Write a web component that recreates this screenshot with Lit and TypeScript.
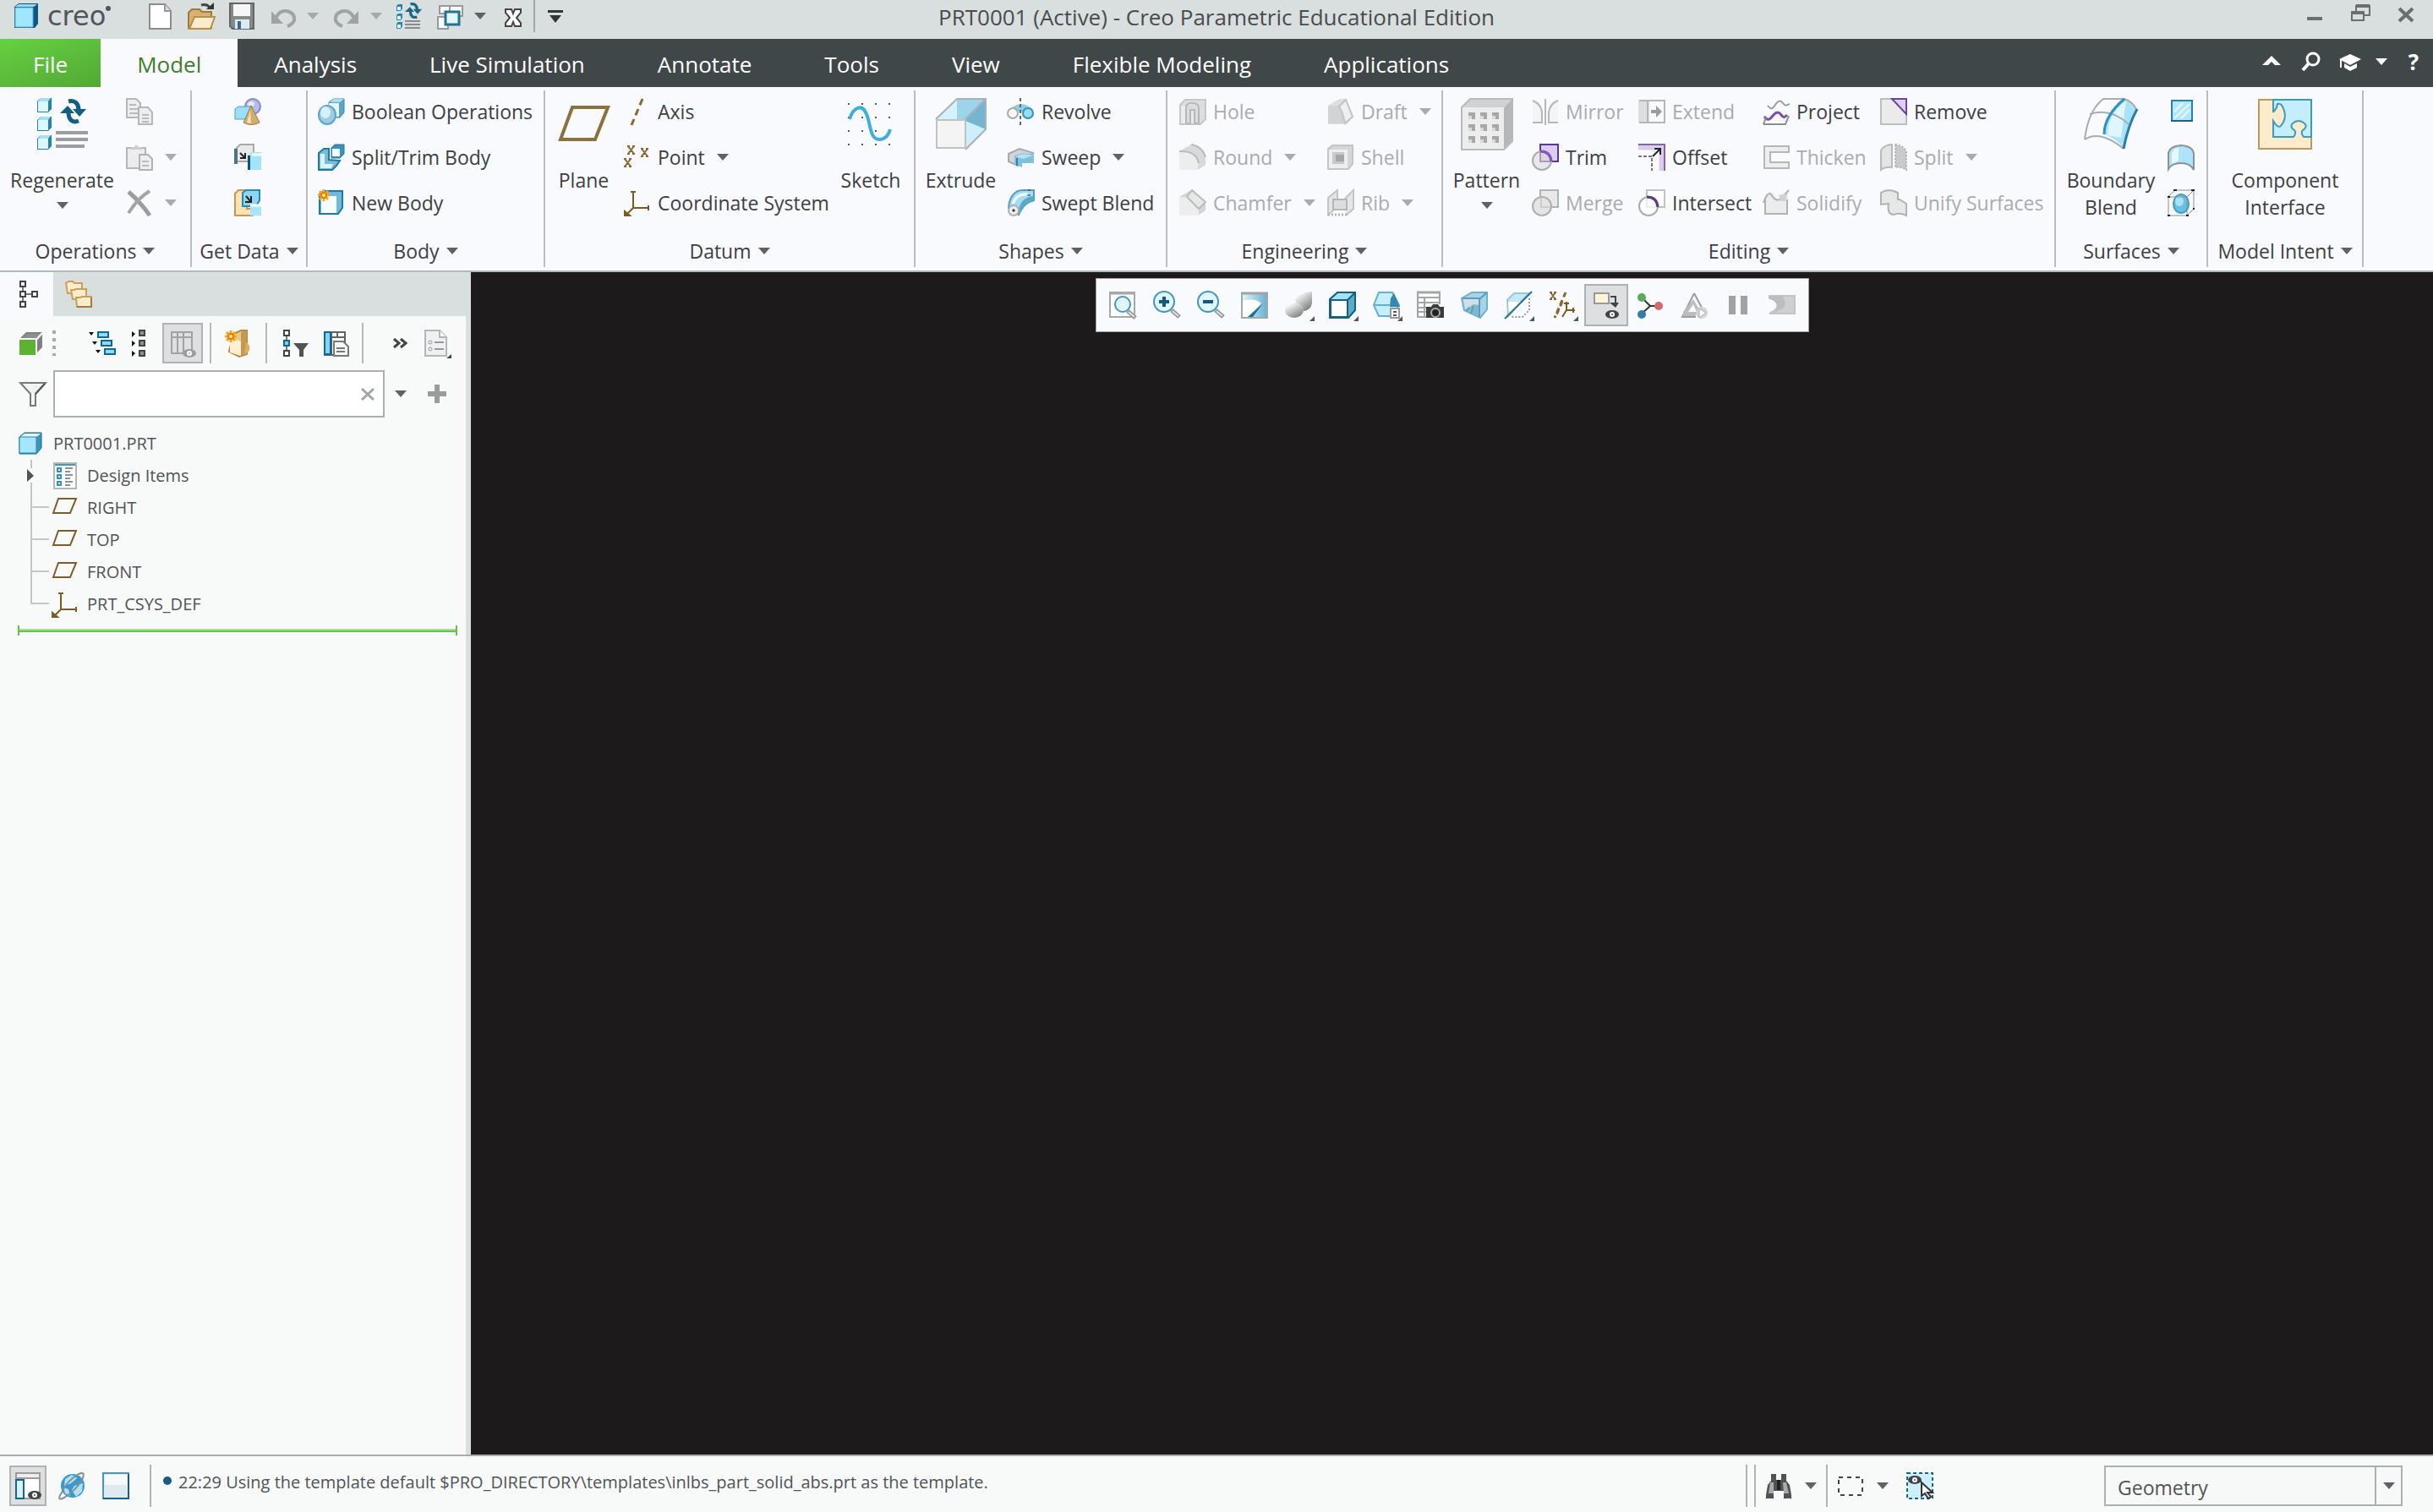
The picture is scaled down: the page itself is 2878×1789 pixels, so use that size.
import { LitElement, html, css, svg, nothing } from "lit";
import type { TemplateResult } from "lit";
import { customElement, state } from "lit/decorators.js";
import { classMap } from "lit/directives/class-map.js";

/* ---------- icons ---------- */

const smallCube = (x: number, y: number) => svg`
  <path d="M${x} ${y + 5}l4-4h13v13l-4 4H${x}z" fill="#1f86b0"/>
  <path d="M${x + 1} ${y + 5}l3-4h12l-3 4z" fill="#a4e0f5"/>
  <path d="M${x + 1} ${y + 5}h12v12H${x + 1}z" fill="#dff7ff"/>`;

const tinyCube = (x: number, y: number) => svg`
  <path d="M${x} ${y + 2}l2-2h5v5l-2 3H${x}z" fill="#2587b3"/>
  <path d="M${x + 1} ${y + 3}h4v4H${x + 1}z" fill="#e6f9ff"/>`;

const cross = (x: number, y: number, s = 7) =>
  svg`<path d="M${x} ${y}l${s} ${s + 2}M${x + s} ${y}l-${s} ${s + 2}M${x - 1} ${y}h3M${x + s - 2} ${y}h3M${x - 1} ${y + s + 2}h3M${x + s - 2} ${y + s + 2}h3" stroke="#87682f" stroke-width="2" fill="none"/>`;

const spark = (x: number, y: number) => svg`
  <path d="M${x} ${y - 7}v14M${x - 7} ${y}h14M${x - 5} ${y - 5}l10 10M${x + 5} ${y - 5}l-10 10" stroke="#f5a81c" stroke-width="3"/>
  <circle cx="${x}" cy="${y}" r="3" fill="#fff3a0" stroke="#e87a10" stroke-width="2"/>`;

const eye = (x: number, y: number, c = "#404446") => svg`
  <ellipse cx="${x}" cy="${y}" rx="8" ry="5" fill="${c}"/>
  <circle cx="${x}" cy="${y}" r="3" fill="#fff"/><circle cx="${x}" cy="${y}" r="1" fill="${c}"/>`;

const corner = svg`<path d="M35 29v6h-6z" fill="#555"/>`;

const handle = (x: number, y: number) => svg`
  <path d="M${x} ${y}l9 8" stroke="#8d8f91" stroke-width="5"/><path d="M${x + 1} ${y + 1}l7 6" stroke="#e4e5e6" stroke-width="2"/>`;

const cycle = (c: string) => svg`
  <path d="M10 3c8-2 12 3 12 10" fill="none" stroke="${c}" stroke-width="5"/>
  <path d="M15 12h16l-8 9z" fill="${c}"/>
  <path d="M22 26c-8 3-12-2-12-10" fill="none" stroke="${c}" stroke-width="5"/>
  <path d="M0 17h17l-8-9z" fill="${c}"/>`;

const planeSmall = svg`<path d="M8 5h21l-7 17H2z" fill="none" stroke="#7b5f2b" stroke-width="2"/>`;

const axes = svg`<path d="M11 3v19h19M11 22l-8 8M8 3h6M29 19v6" fill="none" stroke="#7a5b22" stroke-width="2"/><path d="M1 26l6 5H1z" fill="#7a5b22" stroke="#7a5b22" stroke-width="2"/>`;

const icons: Record<string, TemplateResult> = {
  regen: svg`${smallCube(2, 0)}${smallCube(2, 22)}${smallCube(2, 44)}
    <g transform="translate(29 2)">${cycle("#135e82")}</g>
    <path d="M24 42h38M24 50h38M24 58h34" stroke="#9b9da0" stroke-width="4"/>`,
  copy: svg`<g fill="#eee" stroke="#b4b6b8" stroke-width="2"><path d="M1 1h11l5 5v17H1z"/><path d="M15 11h11l5 6v14H15z"/></g>
    <path d="M4 8h8M4 13h10M4 18h10M19 20h8M19 24h8M19 28h8" stroke="#b9bbbd" stroke-width="2"/>`,
  paste: svg`<path d="M1 5h22v24H1z" fill="#ececec" stroke="#b4b6b8" stroke-width="2"/><path d="M6 7V4h4l2-3 3 3h4v3z" fill="#ccc"/>
    <path d="M16 13h10l5 5v13H16z" fill="#eee" stroke="#b0b2b4" stroke-width="2"/><path d="M19 21h8M19 26h8" stroke="#b9bbbd" stroke-width="2"/>`,
  del: svg`<path d="M3 3c5 4 18 17 25 28" fill="none" stroke="#9a9c9e" stroke-width="5"/><path d="M28 2C18 8 10 17 3 28" fill="none" stroke="#a2a4a6" stroke-width="4"/>`,
  udf: svg`<circle cx="22" cy="10" r="9" fill="#b5bce8" stroke="#838bc9" stroke-width="2"/><ellipse cx="20" cy="7" rx="4" ry="3" fill="#e6e9fb"/>
    <path d="M1 13l4-3h16v12l-3 3H1z" fill="#9bdffa" stroke="#4f9fc2" stroke-width="1"/>
    <path d="M20 9l10 20q-10 5-19 0z" fill="#d2ae6c" stroke="#a07735" stroke-width="1"/><path d="M19 14l-4 15q3 1 5 1z" fill="#f3deb2"/>`,
  copygeom: svg`<path d="M1 7l6-6h16v14l-6 6H1z" fill="#e9e9e9" stroke="#a9a9a9" stroke-width="2"/><path d="M0 6h4v18H0z" fill="#4c7386"/>
    <path d="M7 11l6 6M13 11v6H7" stroke="#222" stroke-width="2" fill="none"/><path d="M17 13l3-3h12v21H17z" fill="#a3e4fd"/><path d="M16 14h3v17h-3z" fill="#0d5175"/><path d="M21 13h11" stroke="#fff" stroke-width="3"/>`,
  shrink: svg`<path d="M1 5l4-4h10v22h7v8H1z" fill="#fbe3b6" stroke="#c69a4c" stroke-width="2"/>
    <path d="M10 4l4-3h16v12l-4 7H10z" fill="#8fd5f2" stroke="#2a88b1" stroke-width="2"/><path d="M14 8l6 7M20 8v7h-7" stroke="#222" stroke-width="2" fill="none"/>
    <path d="M19 20h13v11H19z" fill="#a5e6ff"/><path d="M19 19h13" stroke="#fff" stroke-width="3"/>`,
  boolean: svg`<path d="M13 5l6-4h12v16l-5 6H13z" fill="#5aa6c4" stroke="#378aaa" stroke-width="1"/><path d="M13 6h12v16H13z" fill="#e6f7fd"/><path d="M14 5l5-4h12l-5 4z" fill="#a9dff1"/>
    <ellipse cx="11" cy="20" rx="10" ry="11" fill="#9ccde2" stroke="#5fa5c4" stroke-width="2"/><ellipse cx="9" cy="17" rx="6" ry="7" fill="#d6f0fa"/>`,
  splitbody: svg`<path d="M1 11l6-5h6v13l13 1-4 6-5 5H1z" fill="#7abddb" stroke="#2278a0" stroke-width="2"/><path d="M3 12h5v12h10l-2 5H3z" fill="#d9f4fe"/>
    <path d="M16 5l4-4h11v11l-5 5H16z" fill="#3b92b8" stroke="#23799f" stroke-width="1"/><path d="M17 6h9v9h-9z" fill="#f2fcff"/>`,
  newbody: svg`<path d="M2 6l5-4h22v20l-5 7H2z" fill="#72b9d9" stroke="#1b7ba5" stroke-width="2"/><path d="M4 8h18v20H4z" fill="#f7fdff"/>${spark(7, 7)}`,
  plane: svg`<path d="M18 12h42L45 50H4z" fill="none" stroke="#8c713c" stroke-width="4"/>`,
  axis: svg`<path d="M22 1l-13 31" stroke="#87682f" stroke-width="3" stroke-dasharray="8 5"/>`,
  point: svg`${cross(5, 3)}${cross(21, 6)}${cross(1, 18)}`,
  csys: axes,
  sketch: svg`<path d="M5 8h56M5 24h56M5 40h56M5 56h56" stroke="#555" stroke-width="2" stroke-dasharray="2 14"/>
    <path d="M7 26C11 12 22 7 27 20c5 12 4 30 15 30 7 0 11-5 13-12" fill="none" stroke="#3eaee0" stroke-width="4"/>`,
  extrude: svg`<path d="M2 26L27 2h34v36L37 62z" fill="#cdeefc"/><path d="M27 2h34v36L37 28z" fill="#74b5d1"/><path d="M2 26L27 2h34L37 26z" fill="#9dd4ea"/><path d="M2 26L27 2v24z" fill="#d5f3ff"/>
    <path d="M2 26L27 2h34v36L37 62M37 26L61 2" fill="none" stroke="#a9b1b5" stroke-width="2"/><path d="M3 27h34v33H3z" fill="#f4f4f4" stroke="#bfc1c2" stroke-width="2"/>`,
  revolve: svg`<path d="M2 14Q16 0 30 14v6q-14-8-28 0z" fill="#8fcde6"/><circle cx="6" cy="18" r="6" fill="#f6f6f6" stroke="#a7a9ab" stroke-width="2"/>
    <circle cx="24" cy="18" r="6" fill="#99dcf6" stroke="#2f93bd" stroke-width="2"/><path d="M15 0v32" stroke="#666" stroke-width="2" stroke-dasharray="4 3"/>`,
  sweep: svg`<path d="M1 12l13-6 16 5-5 6-9-3-4 3v9L1 21z" fill="#d3d6d8" stroke="#a7aaac" stroke-width="2"/><path d="M8 14l10-3 13 2v10l-14 0v5l-9-4z" fill="#7fc0dc"/><path d="M9 15l9-3 12 2-12 4z" fill="#b5e3f4"/><path d="M11 17v9" stroke="#2b84aa" stroke-width="2"/>`,
  sweptblend: svg`<path d="M1 22C2 9 8 1 18 1h13v12C20 16 17 22 13 30z" fill="#a7dcf0" stroke="#4c9fc2" stroke-width="2"/><path d="M12 28C14 15 20 9 31 8v6c-9 2-13 8-17 15z" fill="#5ba8c8"/><path d="M6 17C9 9 14 5 24 6" fill="none" stroke="#f4fcff" stroke-width="3"/><circle cx="7" cy="25" r="6" fill="#eee" stroke="#aeb0b2" stroke-width="2"/><path d="M6 24h2v2H6zM24 1h3M27 7h-4" fill="#333" stroke="#333"/>`,
  hole: svg`<path d="M1 8l6-6h24v23l-6 6H1z" fill="#dcddde" stroke="#c6c7c8" stroke-width="2"/><path d="M2 9h22v21H2z" fill="#eaebeb"/><path d="M8 30V12q0-7 8-6 7 0 7 6v18h-5V14h-5v16z" fill="#ddd" stroke="#b6b7b8" stroke-width="2"/>`,
  round: svg`<path d="M0 9L14 1q16 3 17 14v10l-9 6H0z" fill="#d8d9da"/><path d="M0 9q20 0 22 12v10H0z" fill="#ededed"/><path d="M0 9q20-1 23 14M14 1q13 2 17 15" fill="none" stroke="#bbb" stroke-width="2"/>`,
  chamfer: svg`<path d="M0 9L14 1l17 14v10l-9 6H0z" fill="#d3d4d5"/><path d="M0 9h9l14 14v8H0z" fill="#ededed"/><path d="M9 9l6-8 16 14-8 8z" fill="#e6e7e7" stroke="#bbb" stroke-width="2"/>`,
  draft: svg`<path d="M1 9L14 1h8l9 21-8 9H1z" fill="#dededf"/><path d="M1 9h13l8 17-3 4H1z" fill="#d2d3d4"/><path d="M14 10l8-8 8 20-9 8-3-12z" fill="#efefef" stroke="#c2c3c4" stroke-width="2"/>`,
  shell: svg`<path d="M1 6l5-4h24v22l-5 6H1z" fill="#d5d6d7" stroke="#c3c4c5" stroke-width="2"/><path d="M2 7h22v22H2z" fill="#eee"/><path d="M6 10h14v14H6z" fill="#c6c8c9"/><path d="M10 13h10v8H10z" fill="#a4a6a7"/>`,
  rib: svg`<path d="M1 10L12 1v20L1 30zM20 12L31 1v22l-9 8" fill="#e4e5e5" stroke="#c3c4c5" stroke-width="2"/><path d="M7 12h16v12H7z" fill="#dcdddd" stroke="#b5b6b7" stroke-width="2"/><path d="M1 30h22" stroke="#b4b5b6" stroke-width="3" stroke-dasharray="2 2"/>`,
  pattern: svg`<path d="M2 12L12 2h50v50L52 62H2z" fill="#d1d2d3" stroke="#b9babb" stroke-width="2"/><path d="M52 13L61 3v48l-9 10z" fill="#b5b7b8"/><path d="M3 12h49v49H3z" fill="#ededee"/>
    <g fill="#a5a7a9"><path d="M10 18h8v8h-8zM24 18h8v8h-8zM38 18h8v8h-8zM10 32h8v8h-8zM24 32h8v8h-8zM38 32h8v8h-8zM10 46h8v8h-8zM24 46h8v8h-8zM38 46h8v8h-8z"/></g>
    <g fill="#d9dadb"><path d="M10 22h4v4h-4zM24 22h4v4h-4zM38 22h4v4h-4zM10 36h4v4h-4zM24 36h4v4h-4zM38 36h4v4h-4zM10 50h4v4h-4zM24 50h4v4h-4zM38 50h4v4h-4z"/></g>`,
  mirror: svg`<path d="M1 3q10 4 11 14v12H1M31 3q-10 4-11 14v12h11" fill="#f4f4f4" stroke="#b5b7b8" stroke-width="2"/><path d="M16 1v31" stroke="#b5b7b8" stroke-width="2"/>`,
  trim: svg`<path d="M10 1h21v20H10z" fill="#d9cdf3" stroke="#5e3a86" stroke-width="2"/><ellipse cx="12" cy="20" rx="11" ry="11" fill="#dcdcdc" fill-opacity=".6" stroke="#aaacad" stroke-width="2"/><path d="M10 9q12 0 13 12" fill="none" stroke="#8353b8" stroke-width="3"/>`,
  merge: svg`<path d="M10 1h21v20H10z" fill="#e8e8e8" stroke="#b0b2b3" stroke-width="2"/><ellipse cx="12" cy="20" rx="11" ry="11" fill="#e4e4e4" stroke="#adafb0" stroke-width="2"/><path d="M11 10v11h11" fill="none" stroke="#ccc" stroke-width="2"/>`,
  extend: svg`<path d="M0 3h13v26H0z" fill="#dcdedf"/><path d="M1 3h30v26H1M11 3v26" fill="none" stroke="#b4b6b7" stroke-width="2"/><path d="M15 14h6V9l7 7-7 7v-5h-6z" fill="#999b9d"/>`,
  offset: svg`<path d="M0 4h28v28" fill="none" stroke="#d9cdea" stroke-width="7"/><path d="M0 1h31v31" fill="none" stroke="#8565a6" stroke-width="2"/><path d="M0 15h16v17" fill="none" stroke="#777" stroke-width="2" stroke-dasharray="4 2"/><path d="M17 15l8-8M19 6h7v7" fill="none" stroke="#222" stroke-width="2"/>`,
  intersect: svg`<path d="M10 1h21v20H10z" fill="#fff" stroke="#bfc1c2" stroke-width="2"/><ellipse cx="12" cy="20" rx="11" ry="11" fill="#fff" fill-opacity=".7" stroke="#a9abac" stroke-width="2"/><path d="M10 9q12 0 13 12" fill="none" stroke="#5d3a86" stroke-width="3"/>`,
  project: svg`<path d="M6 9c4 5 6 4 9-1s6-6 9-2 4 3 8 1" fill="none" stroke="#999b9d" stroke-width="2"/><path d="M2 22c4 5 6 4 10-1s7-5 10-1 4 3 7 0" fill="none" stroke="#7b4fa8" stroke-width="3"/><path d="M1 31h26l4-10M1 31l3-8" fill="none" stroke="#8a8c8e" stroke-width="2"/>`,
  thicken: svg`<path d="M31 3H2v26h29v-7H9V10h22z" fill="#eee" stroke="#b4b6b7" stroke-width="2"/>`,
  solidify: svg`<path d="M2 29V13l5-8q5-4 8 3t8-1l7-7v29z" fill="#ececec"/><path d="M1 16q5-14 9-10c4 7 8 8 12 5l9-10M3 12v17h26V12" fill="none" stroke="#b0b2b3" stroke-width="2"/><path d="M19 7l10-2-2 9h-6z" fill="#d0d1d2"/>`,
  remove: svg`<path d="M1 1h30v30H1z" fill="#ebebeb" stroke="#bcbebf" stroke-width="2"/><path d="M14 1h17v18z" fill="#dcd0f6" stroke="#6c4797" stroke-width="2"/>`,
  split: svg`<path d="M1 8q4-7 13-7v27q-8-1-13 3z" fill="#e3e4e4" stroke="#b8b9ba" stroke-width="2"/><path d="M18 1q9 1 13 8v22q-6-4-13-3z" fill="#c9cacb" stroke="#b0b2b3" stroke-width="2" stroke-dasharray="2 2"/>`,
  unify: svg`<path d="M1 4q9-6 20 0v8h2l8 5v14q-8-4-15-1-8 0-6-13l-9 1z" fill="#e6e7e7" stroke="#b0b2b3" stroke-width="2"/>`,
  boundary: svg`<path d="M24 3Q38 0 50 2q8 3 14 14Q55 33 48 60 40 45 22 44L36 6z" fill="#fff"/><path d="M48 2q10 3 15 14Q53 33 47 61 40 50 25 44 26 22 48 2z" fill="#a8e3fb"/><path d="M28 45Q28 20 50 4l-6 44z" fill="#dff6ff"/>
    <path d="M1 50Q5 16 23 2h25q10 3 15 14M1 50q18-12 46 11M7 20q25-8 46 12" fill="none" stroke="#a9abac" stroke-width="2"/><path d="M48 2Q24 22 24 44" fill="none" stroke="#2f92be" stroke-width="3"/><path d="M63 14Q52 34 47 61" fill="none" stroke="#2a7ea6" stroke-width="3"/>`,
  fill: svg`<path d="M5 3h24v24H5z" fill="#b3e6f9" stroke="#2a80a8" stroke-width="2"/><path d="M8 16l10-10M8 24L26 7M16 24l10-10" stroke="#e6f8ff" stroke-width="2"/><path d="M4 27h26" stroke="#1b6288" stroke-width="2"/>`,
  style: svg`<path d="M1 12Q2 3 16 2q14 1 15 10v19q-4-8-15-8T1 30z" fill="#aee4f9" stroke="#8d9193" stroke-width="2"/><path d="M5 12Q7 5 13 5v15l-8 4z" fill="#e9f9ff"/>`,
  freestyle: svg`<ellipse cx="16" cy="17" rx="9" ry="11" fill="#6bbfe0" stroke="#3fa0c6" stroke-width="2"/><ellipse cx="14" cy="14" rx="5" ry="6" fill="#a9e2f5"/><path d="M1 8L9 1h22v22l-8 8H1zM1 9h22v22M23 9l8-8" fill="none" stroke="#8b8e90" stroke-width="1"/><path d="M7 1h4M28 1h4M0 9h3M0 31h3M22 31h3M30 23h2" stroke="#222" stroke-width="2"/>`,
  component: svg`<path d="M1 3h62v58H1z" fill="#fdebcb" stroke="#bb9a5b" stroke-width="2"/><path d="M18 3h45v44H54q-4-5-1-8 6-4 2-8-7-6-14 0-4 4 2 8 3 3-1 8H18V28q5 9 9 6 7-8 4-18-3-10-8-8-1 7-5 9z" fill="#c3eefa" stroke="#3a9ac0" stroke-width="2"/>`,

  /* quick access bar */
  creocube: svg`<path d="M0 5l5-4h23v24l-4 5H0z" fill="#0d5680"/><path d="M1 5l4-3h22l-4 3z" fill="#8fdcf6"/><path d="M1 6h21v23H1z" fill="#a0e6fe" stroke="#63acc8" stroke-width="1"/>`,
  newdoc: svg`<path d="M3 2h18l7 8v21H3z" fill="#fff" stroke="#8a8c8e" stroke-width="2"/><path d="M21 2v8h7" fill="#ddd" stroke="#999" stroke-width="2"/>`,
  open: svg`<path d="M1 30V12l4-4h9l3 3h11v19z" fill="#d8b274" stroke="#a37b37" stroke-width="2"/><path d="M2 31l6-14h24l-5 14z" fill="#fdeccb" stroke="#b98e45" stroke-width="2"/><path d="M16 3q7-2 10 3" fill="none" stroke="#444" stroke-width="3"/><path d="M22 8h9V0z" fill="#333"/>`,
  save: svg`<path d="M2 1h28v30H5l-3-3z" fill="#86898b" stroke="#666" stroke-width="2"/><path d="M6 2h20v14H6z" fill="#f6f6f6"/><path d="M8 20h17v11H8z" fill="#ddeaf2"/><path d="M11 22h4v9h-4z" fill="#3b6c8b"/>`,
  undo: svg`<path d="M8 17Q12 9 20 10q10 2 9 11-2 5-8 7" fill="none" stroke="#a0a3a4" stroke-width="4"/><path d="M2 10v15h14z" fill="#a0a3a4"/>`,
  redo: svg`<path d="M24 17Q20 9 12 10 2 12 3 21q2 5 8 7" fill="none" stroke="#a0a3a4" stroke-width="4"/><path d="M30 10v15H16z" fill="#a0a3a4"/>`,
  regensmall: svg`${tinyCube(1, 2)}${tinyCube(1, 13)}${tinyCube(1, 23)}<g transform="translate(11 0) scale(.65)">${cycle("#1a6789")}</g><path d="M11 22h18M11 26h18M11 30h18" stroke="#888b8d" stroke-width="2"/>`,
  windows: svg`<path d="M1 17h12v14H1zM15 4h15v12H15zM3 4h12v9H3z" fill="#fafafa" stroke="#97999b" stroke-width="2"/><path d="M10 11h16v15H10z" fill="#e2f6fe" stroke="#247295" stroke-width="3"/>`,
  closewin: svg`<path d="M7 8h7l2 5 2-5h7v4l-5 6 5 6v4h-7l-2-5-2 5H7v-4l5-6-5-6z" fill="#fff" stroke="#444" stroke-width="2"/>`,
  more: svg`<path d="M7 9h18v3H7z" fill="#333"/><path d="M9 15h14l-7 9z" fill="#333"/>`,
  minimize: svg`<path d="M7 18h18v4H7z" fill="#6b6f70"/>`,
  restore: svg`<path d="M11 12V5h16v11h-7" fill="none" stroke="#6b6f70" stroke-width="2"/><path d="M11 5h16" stroke="#6b6f70" stroke-width="4"/><path d="M6 13h14v9H6z" fill="none" stroke="#6b6f70" stroke-width="2"/><path d="M5 13h16" stroke="#6b6f70" stroke-width="4"/>`,
  close: svg`<path d="M8 8l16 15M24 8L8 23" stroke="#6b6f70" stroke-width="4"/>`,
  chevup: svg`<path d="M5 20L16 9l11 11h-7l-4-4-4 4z" fill="#fff"/>`,
  search: svg`<circle cx="19" cy="13" r="7" fill="none" stroke="#fff" stroke-width="3"/><path d="M14 18l-7 8" stroke="#fff" stroke-width="4"/>`,
  learn: svg`<path d="M16 7l13 6-13 7-13-7z" fill="#fff"/><path d="M9 18v5l7 4 8-4v-5l-8 4z" fill="#fff"/><path d="M5 13v10" stroke="#fff" stroke-width="2"/>`,

  /* model tree */
  tree: svg`<path d="M10 4v26M10 16h14" stroke="#777" stroke-width="2"/><g fill="#fff" stroke="#404446" stroke-width="2"><path d="M7 1h6v6H7zM7 13h6v6H7zM7 25h6v6H7zM21 13h6v6h-6z"/></g>`,
  folders: svg`<g fill="#fbeccb" stroke="#c99f59" stroke-width="2"><path d="M1 3l3-2h5l2 2h9v12H3z"/><path d="M7 11h4l2-1h12v12H9z"/><path d="M13 20h5l2-1h11v12H14z"/></g><path d="M14 31h17V20" fill="none" stroke="#a37b37" stroke-width="2"/>`,
  greencube: svg`<path d="M1 11l8-8h19v18l-7 7z" fill="#7d7f80"/><path d="M3 11l7-6h17l-6 6z" fill="#8c8e90"/><path d="M21 12l7-8" stroke="#fff" stroke-width="2"/><path d="M1 11h20v19H1z" fill="#5ab432"/><path d="M1 11h20v19" fill="none" stroke="#fff" stroke-width="2"/>`,
  expand: svg`<g fill="#8cdcfc" stroke="#15668c" stroke-width="2"><path d="M11 3h12v6H11zM15 13h12v6H15zM19 23h12v6H19z"/></g><path d="M0 3h6L3 7zM4 14h6l-3 4zM8 24h6l-3 4z" fill="#111"/>`,
  collapse: svg`<g fill="#8f9193" stroke="#404446" stroke-width="2"><path d="M17 1h6v6h-6zM17 13h6v6h-6zM17 25h6v6h-6z"/></g><path d="M8 2l4 3-4 4zM8 13l4 3-4 4zM8 25l4 3-4 4z" fill="#111"/>`,
  columns: svg`<path d="M3 3h24v25H3zM3 9h24M10 3v25M17 3v25" fill="none" stroke="#a0a3a4" stroke-width="2"/>${eye(24, 28, "#9a9c9e")}`,
  newbook: svg`<path d="M10 5l9-4h7v28l-9 3-12-6z" fill="#e9c888" stroke="#b78a3e" stroke-width="2"/><path d="M19 3l7-2v27l-7 3z" fill="#c39a50"/><path d="M6 10l13 4v17L6 27z" fill="#fdf0d2"/><path d="M25 15q7 4 3 11l-5 4z" fill="#d9b066"/>${spark(7, 8)}`,
  treefilter: svg`<g transform="translate(2 0)"><path d="M5 5v24" stroke="#777" stroke-width="2"/><g stroke="#404446" stroke-width="2"><path d="M2 1h6v6H2zM2 25h6v6H2z" fill="#fff"/><path d="M2 13h6v6H2z" fill="#6fd0f8" stroke="#15668c"/></g><path d="M13 16h18l-6 8v8h-5v-8z" fill="#505355"/></g>`,
  treecols: svg`<g transform="translate(2 0)"><path d="M2 3h24v27H2zM2 9h24M10 3v26M17 3v7" fill="#fff" stroke="#606366" stroke-width="2"/><path d="M2 3h7v26H2z" fill="#7fd6fa" stroke="#15668c" stroke-width="2"/><path d="M13 14h11l6 6v11H13z" fill="#f6f6f6" stroke="#77797b" stroke-width="2"/><path d="M16 22h10M16 26h10" stroke="#777" stroke-width="2"/></g>`,
  chevrons: svg`<path d="M7 11l6 5-6 5M15 11l6 5-6 5" fill="none" stroke="#404446" stroke-width="3"/>`,
  listdoc: svg`<path d="M1 1h17l8 8v22H1z" fill="#eef1f2" stroke="#b4b6b8" stroke-width="2"/><path d="M18 1v8h8" fill="#fff" stroke="#b4b6b8" stroke-width="2"/><circle cx="7" cy="15" r="2" fill="none" stroke="#999"/><circle cx="7" cy="23" r="2" fill="none" stroke="#999"/><path d="M12 15h11M12 23h11" stroke="#999" stroke-width="2"/><path d="M32 29v5h-6z" fill="#444"/>`,
  funnel: svg`<path d="M2 3h30L20 16v14h-6V16z" fill="#f3f3f3" stroke="#77797b" stroke-width="2"/><path d="M20 16l11-12" stroke="#555" stroke-width="2"/>`,
  clear: svg`<path d="M9 10l14 13M23 10L9 23" stroke="#a1a4a6" stroke-width="3"/>`,
  plus: svg`<path d="M13 5h6v8h8v6h-8v8h-6v-8H5v-6h8z" fill="#999b9d"/>`,
  part: svg`<path d="M2 8l6-5h20v18l-6 7H2z" fill="#3b94bd" stroke="#1b6a92" stroke-width="1"/><path d="M3 8l5-4h19l-5 4z" fill="#e3f8ff"/><path d="M2 8h20v19H2z" fill="#a5e6fe" stroke="#2f83aa" stroke-width="1"/>`,
  design: svg`<path d="M3 1h26v30H3z" fill="#fff" stroke="#b4b6b8" stroke-width="2"/><path d="M4 3h24" stroke="#419cc2" stroke-width="2"/><g fill="#fff" stroke="#2f93bd" stroke-width="2"><path d="M7 7h4v4H7zM7 15h4v4H7zM7 23h4v4H7z"/></g><path d="M16 7h9M16 11h6M16 15h9M16 19h6M16 23h9M16 27h6" stroke="#8f9294" stroke-width="2"/>`,
  planesmall: planeSmall,

  /* graphics toolbar */
  refit: svg`<path d="M1 1h29v29H1z" fill="#fff" stroke="#a5a7a9" stroke-width="2"/><path d="M0 2h31" stroke="#a5a7a9" stroke-width="3"/><circle cx="16" cy="15" r="9" fill="#dff6ff" stroke="#4796b9" stroke-width="2"/>${handle(22, 23)}`,
  zoomin: svg`<circle cx="13" cy="12" r="12" fill="#dff6ff" stroke="#4796b9" stroke-width="2"/>${handle(22, 22)}<path d="M7 12h12M13 6v12" stroke="#14587a" stroke-width="4"/>`,
  zoomout: svg`<circle cx="13" cy="12" r="12" fill="#dff6ff" stroke="#4796b9" stroke-width="2"/>${handle(22, 22)}<path d="M7 12h12" stroke="#14587a" stroke-width="4"/>`,
  repaint: svg`<defs><linearGradient id="sky" x1="0" x2="1"><stop offset="0" stop-color="#e4f5fb"/><stop offset="1" stop-color="#67b0ce"/></linearGradient></defs>
    <path d="M1 2h30v29H1z" fill="url(#sky)" stroke="#9fa9ae" stroke-width="2"/><path d="M2 30V11q14-4 22 3L8 30z" fill="#fff"/><path d="M26 14L8 30h6z" fill="#1c6f96"/><path d="M0 2h32" stroke="#a1a4a6" stroke-width="3"/>`,
  rendering: svg`<defs><linearGradient id="ball" x1=".2" x2=".8" y1=".1" y2="1"><stop offset="0" stop-color="#fff"/><stop offset="1" stop-color="#777"/></linearGradient></defs>
    <path d="M12 9Q16 2 32 0v14q-2 8-9 9l-8-2z" fill="url(#ball)"/><ellipse cx="11" cy="22" rx="11" ry="9" fill="url(#ball)"/>${corner}`,
  shaded: svg`<path d="M1 9l9-8h21v21l-8 9H1z" fill="#5cacc9" stroke="#15607f" stroke-width="2"/><path d="M3 9l8-7h18l-7 7z" fill="#a5e2f5"/><path d="M2 10h20v20H2z" fill="#fff" stroke="#15607f" stroke-width="2"/><path d="M22 10l9-9" stroke="#15607f" stroke-width="2"/>${corner}`,
  saved: svg`<path d="M7 1h16l8 15-8 13H7L1 16z" fill="#c8edfb" stroke="#5fb2d3" stroke-width="2"/><path d="M25 2l7 16H20l1-10z" fill="#3488ae"/><path d="M2 16h18" stroke="#5fb2d3" stroke-width="2"/><path d="M21 20h10v11H21z" fill="#fff" stroke="#999" stroke-width="2"/><path d="M24 24h4M24 28h4" stroke="#555" stroke-width="2"/>${corner}`,
  viewmgr: svg`<path d="M1 1h26v28H1z" fill="#fff"/><path d="M1 1v29h12M1 7h26M1 13h26M1 19h14M1 24h12M9 7v22M27 1v14" fill="none" stroke="#a3a5a7" stroke-width="2"/><path d="M0 1h28" stroke="#a3a5a7" stroke-width="3"/><path d="M11 18h6l2-3h6l2 3h5v13H11z" fill="#3c3c3c"/><circle cx="22" cy="25" r="5" fill="#222" stroke="#aaa" stroke-width="2"/>`,
  persp: svg`<path d="M1 8L13 1h18v20l-8 10L4 22z" fill="#a6d3e5" stroke="#6fb0cb" stroke-width="2"/><path d="M3 8h18v14L5 21z" fill="#cfdfe6"/><path d="M6 21l9-6 7 1v14z" fill="#7fb9d0"/><path d="M22 9l9-8M22 9v21M2 8h20M10 19l-4 4M15 17l-3 9" stroke="#5b9fbd" stroke-width="2" fill="none"/>`,
  section: svg`<path d="M3 10l8-8h18L4 29z" fill="#c4e8f5" stroke="#9cc5d6" stroke-width="2"/><path d="M4 12h17L5 28z" fill="#fff"/><path d="M29 8v14l-8 8H8" fill="none" stroke="#999" stroke-width="2" stroke-dasharray="2 2"/><path d="M32 0L0 32" stroke="#276f90" stroke-width="2"/>${corner}`,
  datumdisp: svg`${cross(2, 1, 6)}<path d="M20 1L7 31M16 12L8 30" fill="none" stroke="#87682f" stroke-width="3" stroke-dasharray="6 4"/><path d="M21 12v10h10M21 22l-5 8M18 14h6M29 19v6" fill="none" stroke="#7a5b22" stroke-width="2"/>${corner}`,
  annot: svg`<path d="M2 2h17v12H2z" fill="#fff3da" stroke="#999" stroke-width="2"/><path d="M21 6h6v9" fill="none" stroke="#404446" stroke-width="2"/><path d="M20 13l11 0-4 6z" fill="#404446"/>${eye(23, 27)}`,
  spin: svg`<path d="M5 6l11 11h10M16 17L5 27" fill="none" stroke="#333" stroke-width="2"/><circle cx="6" cy="7" r="5" fill="#5ba95b"/><circle cx="26" cy="17" r="5" fill="#d9686a"/><circle cx="6" cy="27" r="5" fill="#2f7fa8"/>`,
  simulate: svg`<path d="M16 2L2 30h16M16 2l9 17" fill="none" stroke="#9b9da0" stroke-width="2"/><path d="M15 9l8 14-6 6H3v-5z" fill="#bbbdbf"/><path d="M15 15l4 9H9z" fill="#fff"/><circle cx="25" cy="25" r="7" fill="#d3d4d5"/><path d="M22 20l8 5-8 6z" fill="#fff" stroke="#aaa"/>`,
  pause: svg`<path d="M5 5h8v22H5zM19 5h8v22h-8z" fill="#a0a2a4"/>`,
  stopflow: svg`<path d="M1 5h30v21H1q12-6 9-12Q7 9 1 8z" fill="#cfd0d1" stroke="#c3c4c5" stroke-width="2"/><path d="M1 5h15q6 8 2 14L6 26q10-14-5-18z" fill="#bcbdbe"/>`,

  /* status bar */
  panels: svg`<path d="M2 1h28v30H2z" fill="#fff" stroke="#9a9c9e" stroke-width="2"/><path d="M2 1h28v6H2z" fill="#eee" stroke="#9a9c9e" stroke-width="2"/><path d="M2 9h9v22H2z" fill="#d7f2fc" stroke="#15668c" stroke-width="2"/>${eye(24, 27)}`,
  globe: svg`<circle cx="17" cy="16" r="14" fill="#389bd0"/><path d="M8 8l8-5 6 4-7 6-8 3zM19 16l10-3-1 10-7 6-5-8zM6 18l6 2 2 8-6-3z" fill="#aee0f6"/><path d="M4 24Q-3 35 7 30 20 22 28 9q5-11-4-7Q9 11 4 24" fill="none" stroke="#888c8f" stroke-width="2"/>`,
  blank: svg`<path d="M1 1h30v30H1z" fill="#dfeaef" stroke="#4b97b8" stroke-width="2"/><path d="M1 31h30V2" fill="none" stroke="#176085" stroke-width="2"/><path d="M3 3h26v12H3z" fill="#fff" fill-opacity=".7"/>`,
  binoc: svg`<path d="M7 2h6v7h6V2h6v8l4 5 2 12v4h-9v-9H10v9H1v-4l2-12 4-5z" fill="#505355"/><path d="M6 12h4v13H4zM21 12h4l3 13h-6z" fill="#a9abac"/><path d="M14 9h4v12h-4z" fill="#222"/>`,
  marquee: svg`<path d="M2 6h28v21H2z" fill="none" stroke="#404446" stroke-width="2" stroke-dasharray="5 5"/>`,
  selvis: svg`<path d="M1 1h30v30H1z" fill="#cdeffb" stroke="#15668c" stroke-width="2" stroke-dasharray="4 3"/>${eye(10, 9)}<path d="M18 12v16l4-3 4 6 3-2-4-5h6z" fill="#fff" stroke="#333" stroke-width="2"/>`,
};

const icon = (name: string, size: 32 | 64 = 32) => html`
  <svg class="icon" width=${size} height=${size} viewBox="0 0 ${size} ${size}" aria-hidden="true">${icons[name]}</svg>`;

const caret = (cls = "") => html`
  <svg class="caret ${cls}" width="14" height="8" viewBox="0 0 14 8" aria-hidden="true"><path d="M0 0h14L7 8z" fill="currentColor"/></svg>`;

const base = css`
  :host { display: block; color: #3c4043; font-family: "Open Sans", "Noto Sans", sans-serif; }
  * { box-sizing: border-box; }
  button, input, select { font: inherit; color: inherit; background: none; border: 0; padding: 0; margin: 0; }
  button { display: flex; align-items: center; text-align: left; white-space: nowrap; }
  .icon { display: block; flex: none; overflow: visible; }
  .caret { display: block; flex: none; color: #5f6264; }
`;

/* ---------- title bar and tabs ---------- */

@customElement("cad-title-bar")
export class CadTitleBar extends LitElement {
  static styles = [base, css`
    .bar { display: grid; grid-template-columns: 1fr auto 1fr; height: 46px; background: #d9dfde; }
    .quick { display: flex; align-items: center; height: 38px; padding-left: 17px; }
    .logo { font: 32px/32px "DejaVu Sans", sans-serif; color: #505658; margin: 0 32px 0 7px; display: flex; width: 78px; }
    .logo svg { margin-top: 4px; flex: none; }
    .tool { width: 48px; height: 38px; justify-content: center; }
    .tool.drop { width: 75px; gap: 12px; }
    .off .caret { color: #a6a9aa; }
    .rule { width: 2px; height: 38px; background: #a3a9a9; }
    .title { margin: 0; font-size: 26px; line-height: 40px; font-weight: 400; color: #484c4e; }
    .window { display: flex; justify-content: flex-end; padding-right: 5px; height: 36px; }
    .window .tool { width: 54px; height: 36px; }
  `];
  render() {
    const tool = (name: string, label: string, drop = false, off = false) => html`
      <button class=${classMap({ tool: true, drop, off })} aria-label=${label}>${icon(name)}${drop ? caret() : nothing}</button>`;
    return html`
      <header class="bar">
        <nav class="quick" aria-label="Quick access">
          ${icon("creocube")}
          <span class="logo">creo<svg width="6" height="6" viewBox="0 0 6 6"><circle cx="3" cy="3" r="3" fill="#505658"/></svg></span>
          ${tool("newdoc", "New")}${tool("open", "Open")}${tool("save", "Save")}
          ${tool("undo", "Undo", true, true)}${tool("redo", "Redo", true, true)}
          ${tool("regensmall", "Regenerate")}${tool("windows", "Windows", true)}
          ${tool("closewin", "Close window")}
          <span class="rule"></span>
          ${tool("more", "Customize")}
        </nav>
        <h1 class="title">PRT0001 (Active) - Creo Parametric Educational Edition</h1>
        <div class="window">
          ${tool("minimize", "Minimize")}${tool("restore", "Restore")}${tool("close", "Close")}
        </div>
      </header>`;
  }
}

@customElement("cad-tabs")
export class CadTabs extends LitElement {
  @state() private active = "Model";
  private tabs = ["Model", "Analysis", "Live Simulation", "Annotate", "Tools", "View", "Flexible Modeling", "Applications"];
  static styles = [base, css`
    .tabs { display: flex; height: 57px; background: #3f4748; color: #fff; font-size: 26px; line-height: 34px; }
    .tab { padding: 2px 43px 0; }
    .file { padding: 2px 39px 0; background: linear-gradient(160deg, #66d142, #52a834); }
    .active { background: #f9fafd; color: #437c2b; }
    .tools { margin-left: auto; display: flex; padding-bottom: 4px; }
    .tool { width: 46px; justify-content: center; }
    .tool.drop { width: 72px; gap: 14px; padding-left: 4px; }
    .tool.help { width: 50px; padding-left: 4px; font-size: 26px; font-weight: 700; }
    .caret { color: #fff; }
  `];
  render() {
    return html`
      <nav class="tabs" aria-label="Ribbon tabs">
        <button class="file">File</button>
        ${this.tabs.map((t) => html`
          <button class=${classMap({ tab: true, active: t === this.active })} @click=${() => (this.active = t)}>${t}</button>`)}
        <div class="tools">
          <button class="tool" aria-label="Minimize ribbon">${icon("chevup")}</button>
          <button class="tool" aria-label="Search">${icon("search")}</button>
          <button class="tool drop" aria-label="Learning">${icon("learn")}${caret()}</button>
          <button class="tool help" aria-label="Help">?</button>
        </div>
      </nav>`;
  }
}

/* ---------- ribbon ---------- */

interface Cmd { icon: string; label?: string; hint?: string; off?: boolean; drop?: boolean; }
interface Column { big?: Cmd; list?: Cmd[]; }
interface Group { id: string; name: string; columns: Column[]; }

const groups: Group[] = [
  { id: "ops", name: "Operations", columns: [
    { big: { icon: "regen", label: "Regenerate", drop: true } },
    { list: [{ icon: "copy", hint: "Copy", off: true }, { icon: "paste", hint: "Paste", off: true, drop: true }, { icon: "del", hint: "Delete", off: true, drop: true }] },
  ] },
  { id: "data", name: "Get Data", columns: [
    { list: [{ icon: "udf", hint: "User-Defined Feature" }, { icon: "copygeom", hint: "Copy Geometry" }, { icon: "shrink", hint: "Shrinkwrap" }] },
  ] },
  { id: "body", name: "Body", columns: [
    { list: [{ icon: "boolean", label: "Boolean Operations" }, { icon: "splitbody", label: "Split/Trim Body" }, { icon: "newbody", label: "New Body" }] },
  ] },
  { id: "datum", name: "Datum", columns: [
    { big: { icon: "plane", label: "Plane" } },
    { list: [{ icon: "axis", label: "Axis" }, { icon: "point", label: "Point", drop: true }, { icon: "csys", label: "Coordinate System" }] },
    { big: { icon: "sketch", label: "Sketch" } },
  ] },
  { id: "shapes", name: "Shapes", columns: [
    { big: { icon: "extrude", label: "Extrude" } },
    { list: [{ icon: "revolve", label: "Revolve" }, { icon: "sweep", label: "Sweep", drop: true }, { icon: "sweptblend", label: "Swept Blend" }] },
  ] },
  { id: "eng", name: "Engineering", columns: [
    { list: [{ icon: "hole", label: "Hole", off: true }, { icon: "round", label: "Round", off: true, drop: true }, { icon: "chamfer", label: "Chamfer", off: true, drop: true }] },
    { list: [{ icon: "draft", label: "Draft", off: true, drop: true }, { icon: "shell", label: "Shell", off: true }, { icon: "rib", label: "Rib", off: true, drop: true }] },
  ] },
  { id: "edit", name: "Editing", columns: [
    { big: { icon: "pattern", label: "Pattern", drop: true } },
    { list: [{ icon: "mirror", label: "Mirror", off: true }, { icon: "trim", label: "Trim" }, { icon: "merge", label: "Merge", off: true }] },
    { list: [{ icon: "extend", label: "Extend", off: true }, { icon: "offset", label: "Offset" }, { icon: "intersect", label: "Intersect" }] },
    { list: [{ icon: "project", label: "Project" }, { icon: "thicken", label: "Thicken", off: true }, { icon: "solidify", label: "Solidify", off: true }] },
    { list: [{ icon: "remove", label: "Remove" }, { icon: "split", label: "Split", off: true, drop: true }, { icon: "unify", label: "Unify Surfaces", off: true }] },
  ] },
  { id: "surf", name: "Surfaces", columns: [
    { big: { icon: "boundary", label: "Boundary Blend" } },
    { list: [{ icon: "fill", hint: "Fill" }, { icon: "style", hint: "Style" }, { icon: "freestyle", hint: "Freestyle" }] },
  ] },
  { id: "intent", name: "Model Intent", columns: [
    { big: { icon: "component", label: "Component Interface" } },
  ] },
];

@customElement("cad-ribbon")
export class CadRibbon extends LitElement {
  static styles = [base, css`
    .ribbon {
      display: grid; height: 219px; padding: 4px 0; background: #f9fafd; border-bottom: 2px solid #b1baba;
      grid-template-columns: 227px 137px 281px 438px 298px 326px 725px 180px 184px; font-size: 23px; line-height: 32px;
    }
    .group { display: flex; flex-direction: column; border-right: 2px solid #b9bdbf; min-width: 0; }
    .columns { display: grid; height: 159px; }
    .ops { grid-template-columns: 147px 1fr; }
    .data { padding-left: 48px; }
    .body { padding-left: 10px; }
    .datum { grid-template-columns: 91px 258px 72px; }
    .shapes { grid-template-columns: 107px 1fr; }
    .eng { grid-template-columns: 175px 1fr; padding-left: 12px; }
    .edit { grid-template-columns: 103px 126px 147px 139px 1fr; }
    .surf { grid-template-columns: 130px 1fr; }
    .list { display: grid; grid-template-rows: repeat(3, 54px); padding-left: 2px; }
    .cmd { gap: 8px; height: 50px; }
    .cmd .caret { margin-left: 6px; }
    .off { color: #a9abad; }
    .off .caret { color: #a9abad; }
    .big { flex-direction: column; padding-top: 8px; height: 158px; white-space: normal; text-align: center; width: 100%; }
    .big .icon { margin-bottom: 18px; }
    .big .caret { margin-top: 10px; }
    .name { flex: 1; justify-content: center; gap: 8px; padding-top: 12px; }
  `];
  render() {
    return html`
      <div class="ribbon">
        ${groups.map((g) => html`
          <section class="group" aria-label=${g.name}>
            <div class="columns ${g.id}">
              ${g.columns.map((c) => (c.big ? this.big(c.big) : html`<div class="list">${c.list!.map((x) => this.cmd(x))}</div>`))}
            </div>
            <button class="name">${g.name}${caret()}</button>
          </section>`)}
      </div>`;
  }
  private big(c: Cmd) {
    return html`<button class="big">${icon(c.icon, 64)}<span>${c.label}</span>${c.drop ? caret() : nothing}</button>`;
  }
  private cmd(c: Cmd) {
    return html`<button class=${classMap({ cmd: true, off: !!c.off })} aria-label=${c.label ?? c.hint ?? ""}>
      ${icon(c.icon)}${c.label ? html`<span>${c.label}</span>` : nothing}${c.drop ? caret() : nothing}</button>`;
  }
}

/* ---------- model tree ---------- */

@customElement("cad-model-tree")
export class CadModelTree extends LitElement {
  private nodes = [
    { icon: "planesmall", label: "RIGHT" },
    { icon: "planesmall", label: "TOP" },
    { icon: "planesmall", label: "FRONT" },
    { icon: "csys", label: "PRT_CSYS_DEF" },
  ];
  static styles = [base, css`
    :host { background: #f8faf9; border-right: 6px solid #d9dfde; font-size: 20px; line-height: 38px; color: #505456; }
    .tabs { display: flex; height: 52px; background: #d9dfde; }
    .tab { width: 60px; padding-left: 14px; }
    .tab.on { width: 63px; padding-left: 17px; background: #f9fafd; }
    .tools { display: flex; align-items: center; height: 64px; padding: 0 14px 0 22px; }
    .tool { width: 48px; height: 48px; justify-content: center; flex: none; }
    .tool.first { width: 32px; }
    .tool.near { width: 38px; }
    .tool.on { background: #dddfe0; border: 2px solid #afb3b4; margin-left: 4px; }
    .rule { width: 2px; height: 48px; background: #b4b8b9; margin: 0 8px; flex: none; }
    .grip { width: 4px; height: 30px; flex: none; margin: 0 36px 0 8px; background: repeating-linear-gradient(#a9acad 0 4px, transparent 4px 9px); }
    .last { margin-left: auto; }
    .filter { display: flex; align-items: center; padding-left: 22px; gap: 9px; }
    .box { display: flex; align-items: center; width: 392px; height: 56px; background: #fff; border: 2px solid #a9b1b1; padding-right: 2px; }
    .box input { flex: 1; min-width: 0; height: 100%; padding: 0 8px; outline: none; }
    .clear { width: 32px; }
    .pick { width: 20px; justify-content: center; }
    .tree { list-style: none; margin: 12px 0 0; padding: 0 0 0 21px; }
    .root, .node { display: flex; align-items: center; height: 38px; gap: 10px; }
    .kids { list-style: none; margin: 0; padding: 0; }
    .stem { width: 30px; height: 38px; flex: none; display: block; }
    .insert { display: block; width: 520px; margin: 6px 0 0 21px; height: 12px; border: solid #6cc04f; border-width: 0 2px; background: linear-gradient(transparent 4px, #a5df8f 4px 6px, #6cc04f 6px 8px, transparent 8px); }
  `];
  render() {
    const tool = (name: string, label: string, cls = "") => html`<button class="tool ${cls}" aria-label=${label}>${icon(name)}</button>`;
    return html`
      <div class="tabs">
        <button class="tab on" aria-label="Model Tree">${icon("tree")}</button>
        <button class="tab" aria-label="Folder Browser">${icon("folders")}</button>
      </div>
      <div class="tools">
        ${tool("greencube", "Bodies", "first")}<span class="grip"></span>
        ${tool("expand", "Expand all", "near")}${tool("collapse", "Collapse all")}${tool("columns", "Show columns", "on")}
        <span class="rule"></span>${tool("newbook", "New group")}<span class="rule"></span>
        ${tool("treefilter", "Tree filters")}${tool("treecols", "Tree columns")}<span class="rule"></span>
        ${tool("chevrons", "More", "last")}${tool("listdoc", "Settings", "near")}
      </div>
      <div class="filter">
        ${icon("funnel")}
        <div class="box"><input type="text" aria-label="Filter tree" /><button class="clear" aria-label="Clear">${icon("clear")}</button></div>
        <button class="pick" aria-label="Filter options">${caret()}</button>
        <button class="tool" aria-label="Add filter">${icon("plus")}</button>
      </div>
      <ul class="tree">
        <li>
          <div class="root">${icon("part")}<span>PRT0001.PRT</span></div>
          <ul class="kids">
            <li class="node">
              <svg class="stem" viewBox="0 0 30 38" aria-hidden="true"><path d="M16 0v10M16 27v11" stroke="#c3c6c7" stroke-width="2"/><path d="M11 11l8 8-8 7z" fill="#505355"/></svg>
              ${icon("design")}<span>Design Items</span>
            </li>
            ${this.nodes.map((n, i) => html`
              <li class="node">
                <svg class="stem icon" viewBox="0 0 30 38" aria-hidden="true"><path d=${i === this.nodes.length - 1 ? "M16 0v18h21" : "M16 0v38M16 18h21"} fill="none" stroke="#c3c6c7" stroke-width="2"/></svg>
                ${icon(n.icon)}<span>${n.label}</span>
              </li>`)}
          </ul>
        </li>
      </ul>
      <span class="insert"></span>`;
  }
}

/* ---------- graphics area ---------- */

@customElement("cad-viewport")
export class CadViewport extends LitElement {
  private tools: [string, string][] = [
    ["refit", "Refit"], ["zoomin", "Zoom In"], ["zoomout", "Zoom Out"], ["repaint", "Repaint"],
    ["rendering", "Rendering Options"], ["shaded", "Display Style"], ["saved", "Saved Orientations"], ["viewmgr", "View Manager"],
    ["persp", "Perspective View"], ["section", "Sections"], ["datumdisp", "Datum Display Filters"], ["annot", "Annotation Display"],
    ["spin", "Spin Center"], ["simulate", "Simulate"], ["pause", "Pause"], ["stopflow", "Stop"],
  ];
  static styles = [base, css`
    :host { background: #1d1a1b; }
    .wrap { display: flex; justify-content: center; padding-top: 7px; }
    .bar { display: flex; align-items: center; height: 64px; padding: 0 5px; background: #f9fafd; border: 1px solid #9fa3a4; }
    .tool { width: 52px; height: 50px; justify-content: center; }
    .tool.on { background: #dddfe1; border: 2px solid #aeb1b3; }
  `];
  render() {
    return html`
      <div class="wrap"><div class="bar" role="toolbar" aria-label="Graphics">
        ${this.tools.map(([n, l]) => html`<button class=${classMap({ tool: true, on: n === "annot" })} aria-label=${l}>${icon(n)}</button>`)}
      </div></div>`;
  }
}

/* ---------- status bar ---------- */

@customElement("cad-status-bar")
export class CadStatusBar extends LitElement {
  static styles = [base, css`
    .status { display: flex; align-items: center; height: 68px; padding: 4px 36px 0 11px; background: #f8faf9; border-top: 2px solid #a9acad; }
    .tool { height: 48px; width: 52px; justify-content: center; flex: none; }
    .tool.on { width: 44px; background: #dddfe0; border: 2px solid #afb3b4; margin-right: 4px; }
    .tool.drop { width: 83px; gap: 15px; }
    .rule { width: 2px; height: 50px; background: #b0b4b5; flex: none; }
    .left { margin: 0 14px 0 14px; }
    .msg { display: flex; align-items: center; margin: 0 auto 8px 0; gap: 8px; font-size: 20px; line-height: 30px; color: #505456; }
    .dot { width: 10px; height: 10px; border-radius: 5px; background: #135e82; margin-bottom: 4px; }
    .gap { margin-left: 8px; }
    .combo { display: flex; align-items: center; width: 353px; height: 48px; margin-left: 192px; border: 2px solid #aab1b1; background: #f7f9f9; }
    .combo select { appearance: none; flex: 1; height: 100%; padding: 4px 14px 0; font-size: 23px; outline: none; color: #505456; }
    .arrow { display: flex; align-items: center; justify-content: center; width: 31px; height: 100%; border-left: 2px solid #aab1b1; }
  `];
  render() {
    return html`
      <footer class="status">
        <button class="tool on" aria-label="Toggle navigator">${icon("panels")}</button>
        <button class="tool" aria-label="Toggle browser">${icon("globe")}</button>
        <button class="tool" aria-label="Full screen">${icon("blank")}</button>
        <span class="rule left"></span>
        <p class="msg"><span class="dot"></span><span>22:29 Using the template default $PRO_DIRECTORY\\templates\\inlbs_part_solid_abs.prt as the template.</span></p>
        <span class="rule"></span><span class="rule gap"></span>
        <button class="tool drop" aria-label="Find">${icon("binoc")}${caret()}</button>
        <span class="rule"></span>
        <button class="tool drop" aria-label="Selection mode">${icon("marquee")}${caret()}</button>
        <button class="tool" aria-label="Select visible">${icon("selvis")}</button>
        <div class="combo">
          <select aria-label="Selection filter"><option>Geometry</option></select>
          <span class="arrow">${caret()}</span>
        </div>
      </footer>`;
  }
}

@customElement("app-root")
export class AppRoot extends LitElement {
  static styles = css`
    :host { display: flex; flex-direction: column; height: 100vh; overflow: hidden; }
    .work { flex: 1; min-height: 0; display: grid; grid-template-columns: 557px 1fr; }
  `;
  render() {
    return html`
      <cad-title-bar></cad-title-bar>
      <cad-tabs></cad-tabs>
      <cad-ribbon></cad-ribbon>
      <main class="work">
        <cad-model-tree></cad-model-tree>
        <cad-viewport></cad-viewport>
      </main>
      <cad-status-bar></cad-status-bar>`;
  }
}
